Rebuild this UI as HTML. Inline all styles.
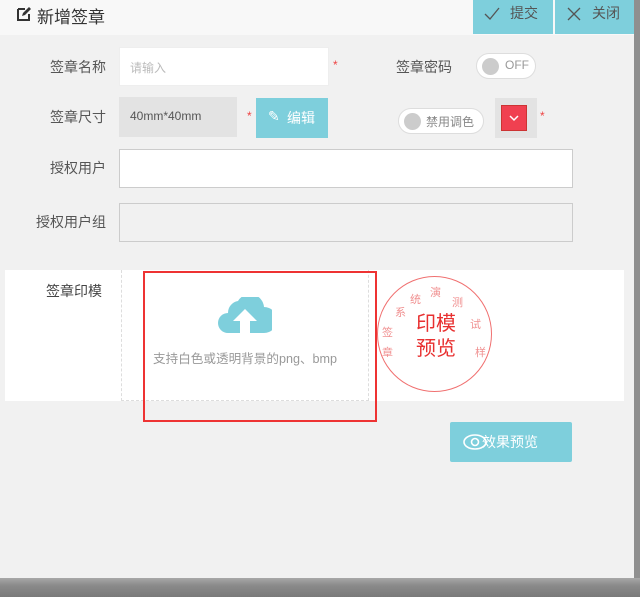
<!DOCTYPE html>
<html><head><meta charset="utf-8"><style>
*{margin:0;padding:0;box-sizing:border-box}
body{width:640px;height:597px;background:#8f8f8f;font-family:"Liberation Sans","Noto Sans CJK SC",sans-serif;position:relative;overflow:hidden}
.panel{position:absolute;left:0;top:0;width:634px;height:578px;background:#f1f1f1}
.bottom{position:absolute;left:0;top:578px;width:640px;height:19px;background:linear-gradient(#a8a8a8,#8a8a8a 40%,#7a7a7a)}
.hdr{position:absolute;left:0;top:0;width:634px;height:35px;background:#f8f8f8}
.abs{position:absolute}
.lbl{position:absolute;font-size:14px;color:#555;text-align:right}
.btn{position:absolute;top:0;height:34px;background:#7ecfdc;color:#555;font-size:14px;line-height:28px}
.inp{position:absolute;border:1px solid #ddd;background:#fff}
.star{position:absolute;color:#e44;font-size:12px}
</style></head><body>
<div class="panel"></div>
<div class="hdr"></div>
<svg class="abs" style="left:16px;top:6px" width="16" height="16" viewBox="0 0 16 16"><path d="M2 3h7M2 3v11h11V8" stroke="#333" stroke-width="2" fill="none"/><path d="M6 10l1-3 6-6 2 2-6 6z" fill="#333"/></svg>
<div class="abs" style="left:37px;top:3px;font-size:17px;color:#333">新增签章</div>
<div class="btn" style="left:473px;width:80px"><svg class="abs" style="left:10px;top:6px" width="18" height="16"><path d="M2 8l5 5 9-11" stroke="#555" stroke-width="1.3" fill="none"/></svg><span style="position:absolute;left:37px;top:-1px">提交</span></div>
<div class="btn" style="left:555px;width:79px"><svg class="abs" style="left:11px;top:6px" width="16" height="16"><path d="M2 2l12 12M14 2L2 14" stroke="#555" stroke-width="1.3" fill="none"/></svg><span style="position:absolute;left:37px;top:-1px">关闭</span></div>

<div class="lbl" style="left:50px;top:57px">签章名称</div>
<div class="inp" style="left:119px;top:47px;width:210px;height:39px;border-color:#eee"><span style="position:absolute;left:10px;top:11px;font-size:12px;color:#bbb">请输入</span></div>
<div class="star" style="left:333px;top:58px">*</div>
<div class="lbl" style="left:396px;top:57px">签章密码</div>
<div class="abs" style="left:476px;top:53px;width:60px;height:26px;border:1px solid #ddd;border-radius:13px;background:#fff"><div class="abs" style="left:5px;top:4px;width:17px;height:17px;border-radius:50%;background:#ccc"></div><span class="abs" style="left:28px;top:4px;font-size:12px;color:#999">OFF</span></div>

<div class="lbl" style="left:50px;top:107px">签章尺寸</div>
<div class="abs" style="left:119px;top:97px;width:118px;height:40px;background:#e3e3e3"><span style="position:absolute;left:11px;top:12px;font-size:12px;color:#555">40mm*40mm</span></div>
<div class="star" style="left:247px;top:109px">*</div>
<div class="abs" style="left:256px;top:98px;width:72px;height:40px;background:#7ecfdc;color:#fff;font-size:14px"><span style="position:absolute;left:12px;top:10px">✎</span><span style="position:absolute;left:31px;top:10px">编辑</span></div>
<div class="abs" style="left:398px;top:108px;width:86px;height:26px;border:1px solid #ddd;border-radius:13px;background:#fff"><div class="abs" style="left:5px;top:4px;width:17px;height:17px;border-radius:50%;background:#ccc"></div><span class="abs" style="left:27px;top:4px;font-size:12px;color:#888">禁用调色</span></div>
<div class="abs" style="left:495px;top:98px;width:42px;height:40px;background:#e3e3e3"><div class="abs" style="left:6px;top:7px;width:26px;height:26px;background:#f04050;border:1px solid #c33"><svg width="24" height="24"><path d="M8 10l4 4 4-4" stroke="#fff" stroke-width="1.5" fill="none"/></svg></div></div>
<div class="star" style="left:540px;top:109px">*</div>

<div class="lbl" style="left:50px;top:158px">授权用户</div>
<div class="inp" style="left:119px;top:149px;width:454px;height:39px;border-color:#ccc"></div>
<div class="lbl" style="left:36px;top:212px">授权用户组</div>
<div class="inp" style="left:119px;top:203px;width:454px;height:39px;border-color:#ccc;background:#f1f1f1"></div>

<div class="abs" style="left:5px;top:270px;width:619px;height:131px;background:#fff"></div>
<div class="lbl" style="left:46px;top:281px;color:#444">签章印模</div>
<div class="abs" style="left:121px;top:270px;width:248px;height:131px;border:1px dashed #ddd;border-top:none"></div>
<svg class="abs" style="left:218px;top:297px" width="54" height="36" viewBox="0 0 54 36"><path d="M10 36a10 10 0 0 1 0-20 12 12 0 0 1 10-12 14 14 0 0 1 26 6 10 10 0 0 1 0 26z" fill="#7ecfdc"/><path d="M27 12l-12 12h7v12h10V24h7z" fill="#fff"/></svg>
<div class="abs" style="left:153px;top:348px;font-size:12.6px;color:#999">支持白色或透明背景的png、bmp</div>
<div class="abs" style="left:143px;top:271px;width:234px;height:151px;border:2px solid #e33"></div>

<div class="abs" style="left:377px;top:276px;width:115px;height:116px;border:1.5px solid #f07070;border-radius:50%"></div>
<div class="abs" style="left:411px;top:312px;font-size:20px;line-height:25px;color:#e83030;width:50px;text-align:center">印模<br>预览</div>
<div class="abs" style="left:380px;top:288px;width:110px;height:80px;font-size:11px;color:#f09090">
<span class="abs" style="left:2px;top:36px">签</span><span class="abs" style="left:15px;top:16px">系</span><span class="abs" style="left:30px;top:3px">统</span><span class="abs" style="left:50px;top:-4px">演</span><span class="abs" style="left:72px;top:6px">测</span><span class="abs" style="left:90px;top:28px">试</span><span class="abs" style="left:2px;top:56px">章</span><span class="abs" style="left:95px;top:56px">样</span></div>

<div class="abs" style="left:450px;top:422px;width:122px;height:40px;background:#7ecfdc;color:#fff;font-size:14px;border-radius:2px">
<svg class="abs" style="left:13px;top:11px" width="30" height="18"><ellipse cx="12" cy="9" rx="11" ry="7" stroke="#fff" stroke-width="1.6" fill="none"/><circle cx="12" cy="9" r="3.5" stroke="#fff" stroke-width="1.6" fill="none"/></svg>
<span class="abs" style="left:32px;top:10px">效果预览</span></div>
<div class="bottom"></div>
</body></html>
